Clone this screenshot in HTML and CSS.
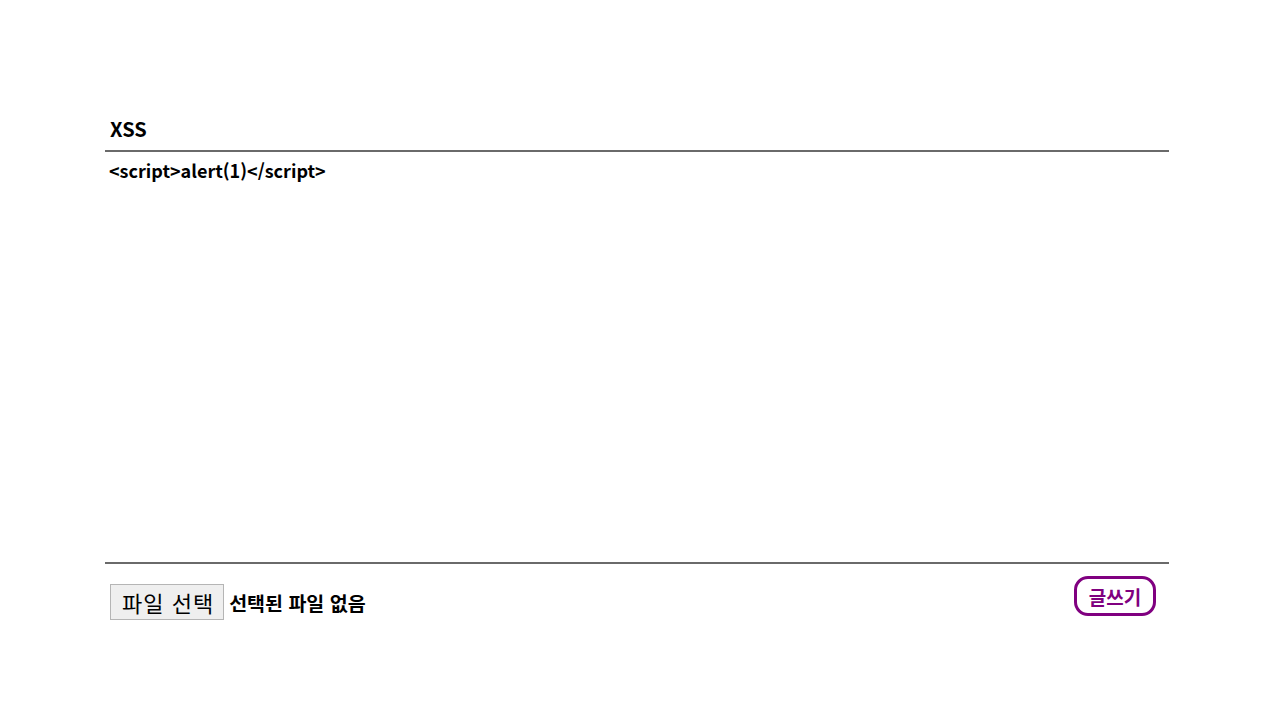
FILE: index.html
```html
<!DOCTYPE html>
<html lang="ko">
<head>
    <meta charset="UTF-8">
    <meta name="viewport" content="width=device-width, initial-scale=1.0">
    <title>XSS</title>
    <link rel="stylesheet" href="styles.css">
</head>
<body>
    <div class="board">
        <div class="board-title">XSS</div>
        <div class="board-content">&lt;script&gt;alert(1)&lt;/script&gt;</div>
        <div class="board-footer">
            <div class="file-box">
                <button type="button" class="file-btn">파일 선택</button>
                <span class="file-name">선택된 파일 없음</span>
            </div>
            <button type="button" class="write-btn">글쓰기</button>
        </div>
    </div>
</body>
</html>
```

FILE: styles.css
```css
body {
    font-family: "Noto Sans CJK KR", "Noto Sans", sans-serif;
    background-color: #fff;
    margin: 0;
    padding: 0;
    color: #000;
}

.board {
    width: 1064px;
    margin: 0 0 0 105px;
    padding-top: 114px;
}

.board-title {
    font-size: 20px;
    font-weight: bold;
    line-height: 30px;
    padding: 0 5px 6px;
    border-bottom: 2px solid #6a6a6a;
}

.board-content {
    height: 412px;
    font-size: 18px;
    font-weight: bold;
    line-height: 26px;
    padding: 5px 4px 0;
    box-sizing: border-box;
    border-bottom: 2px solid #6a6a6a;
}

.board-footer {
    display: flex;
    justify-content: space-between;
    align-items: flex-start;
    padding: 12px 13px 0 5px;
}

.file-box {
    display: flex;
    align-items: center;
    gap: 5px;
    margin-top: 8px;
}

.file-btn {
    font-family: "Noto Sans CJK KR", sans-serif;
    font-size: 22px;
    letter-spacing: 1px;
    line-height: 28px;
    padding: 3px 9px 3px 11px;
    background-color: #efefef;
    border: 1px solid #b5b5b5;
    border-radius: 0;
    color: #000;
}

.file-name {
    font-size: 19.5px;
    font-weight: bold;
}

.write-btn {
    font-family: "Noto Sans CJK KR", sans-serif;
    font-size: 19px;
    font-weight: bold;
    color: #800080;
    background-color: #fff;
    border: 3px solid #800080;
    border-radius: 14px;
    width: 82px;
    height: 40px;
    padding: 0;
    cursor: pointer;
}
```
